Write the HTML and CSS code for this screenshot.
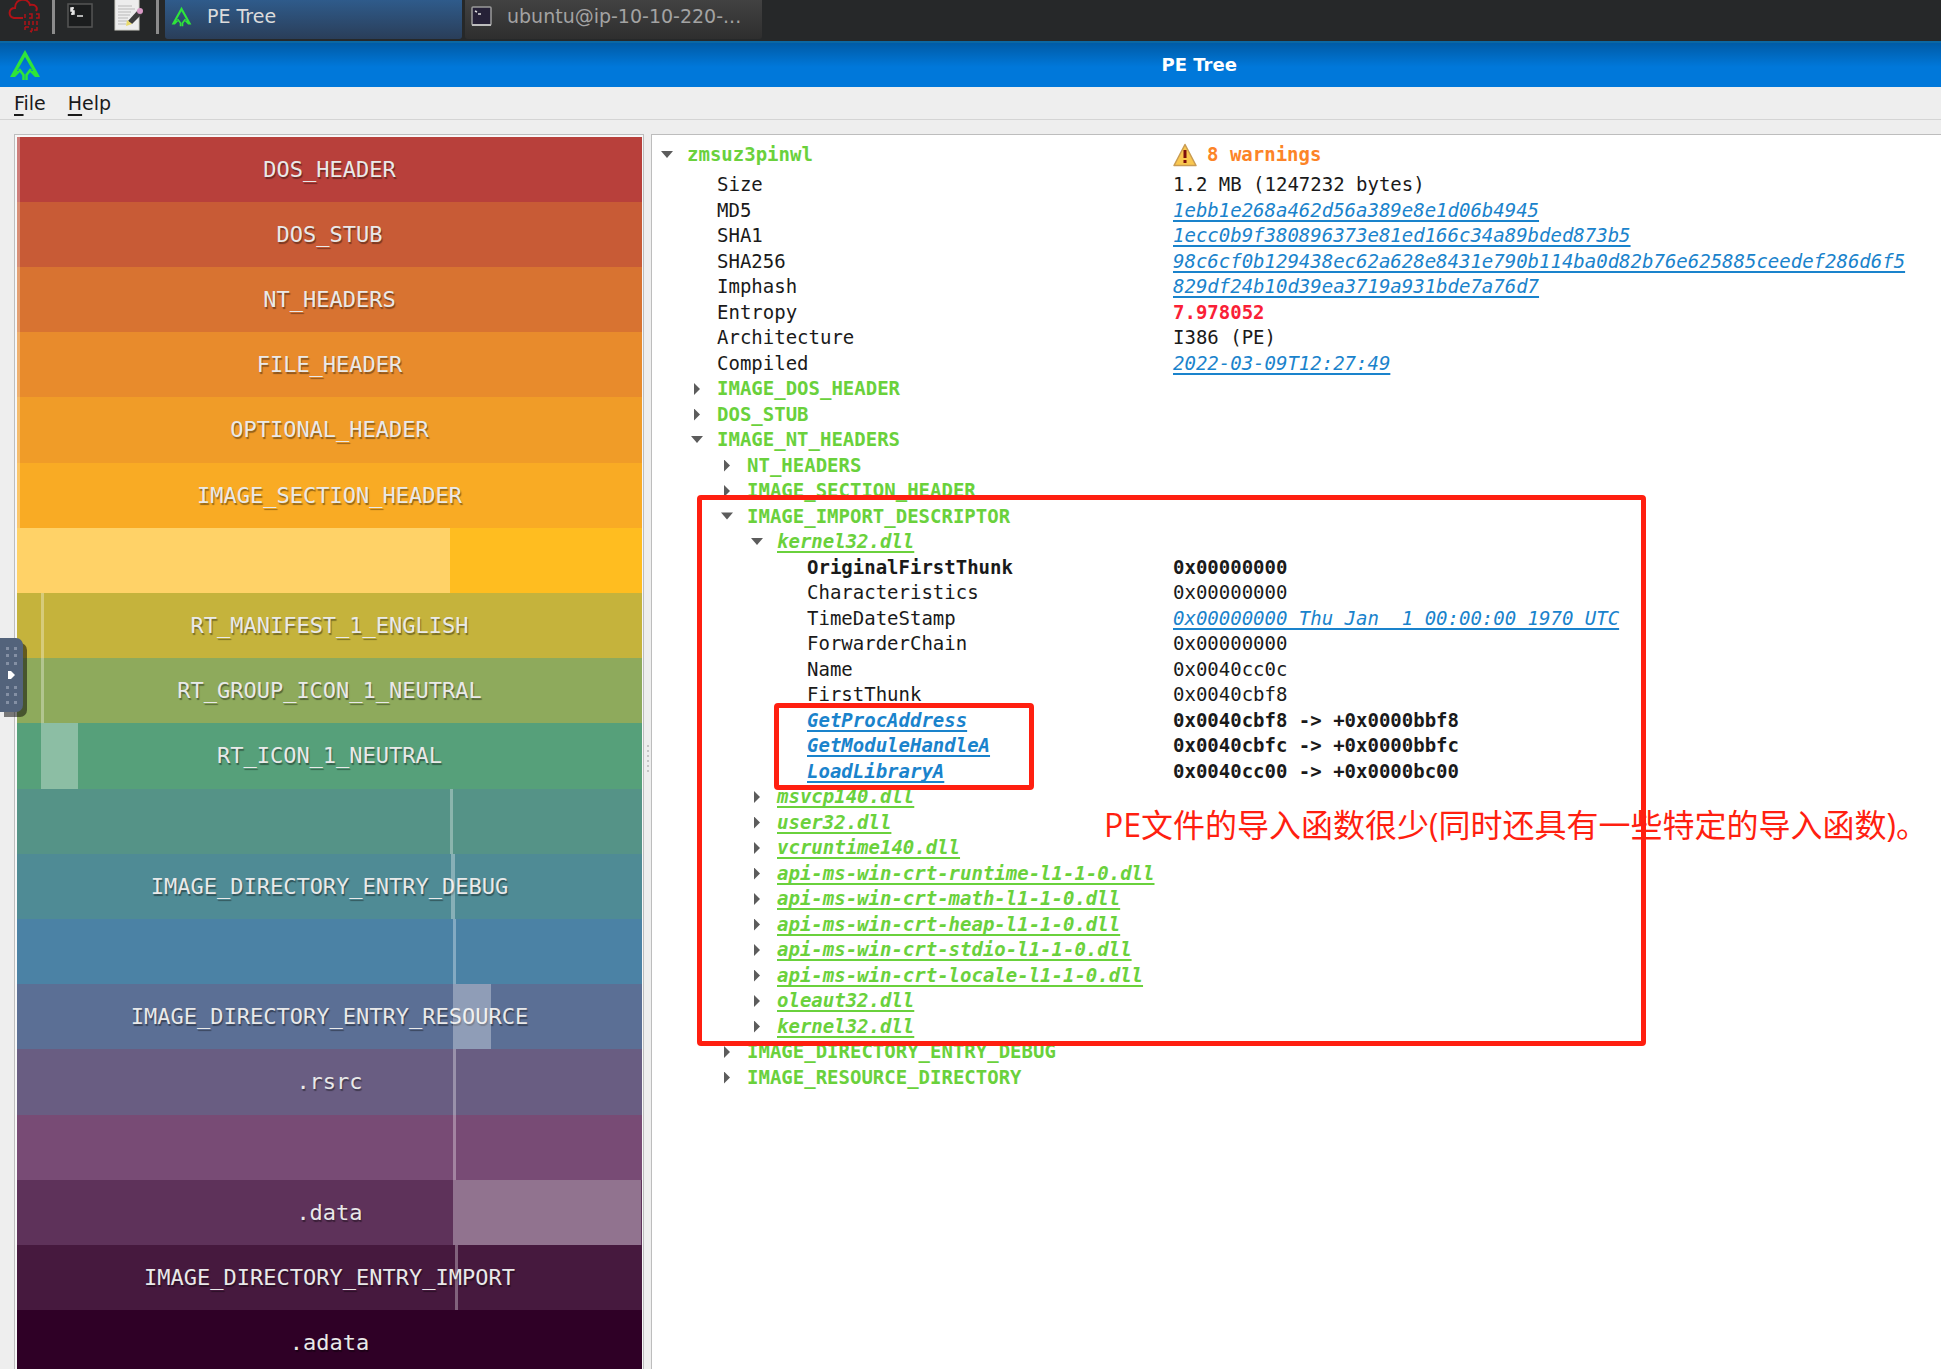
FILE: index.html
```html
<!DOCTYPE html>
<html lang="en">
<head>
<meta charset="utf-8">
<title>PE Tree</title>
<link rel="stylesheet" href="styles.css">
</head>
<body>
<svg width="0" height="0" class="defs" aria-hidden="true">
  <symbol id="logo" viewBox="0 0 32 32">
    <path d="M16 1 31 28H26L22 24 20 22 24 22 16 8 8 22 12 22 10 24 6 28H1Z" fill="#2ee53a"/>
    <path d="M10 20 14.500 26V31M22 20 17.500 26V31" fill="none" stroke="#2ee53a" stroke-width="2.500"/>
  </symbol>
</svg>

<nav class="taskbar" aria-label="Taskbar">
  <button class="launcher" aria-label="Applications">
    <svg width="32" height="34" viewBox="0 0 32 34" fill="none" stroke="#b01217" stroke-width="2">
      <path d="M15 18H6C0 17 0 8 7 8 7-2 20-3 22 5 28 4 30 8 28 11"/>
      <path d="M17 14v4M21 14h3v4h-3M28 14h3v4h-3M17 21v4M21 21v4M25 21v4M29 21v4M17 27h4M17 27v3M24 28v3M29 27v3h-3M22 31l2 1" stroke-width="1.500"/>
    </svg>
  </button>
  <span class="divider"></span>
  <button class="launcher" aria-label="Terminal">
    <svg width="26" height="34" viewBox="0 0 26 34">
      <rect x="1" y="4" width="24" height="23" fill="#1b1d1e" stroke="#555" stroke-width="1.500"/>
      <path d="M7 8H4v3h3v3H4M5.500 7v8M10 16h6" fill="none" stroke="#e6e6e6" stroke-width="1.500"/>
    </svg>
  </button>
  <button class="launcher launcher-edit" aria-label="Text editor">
    <svg width="30" height="34" viewBox="0 0 30 34">
      <rect x="1" y="-4" width="24" height="34" fill="#ededed" stroke="#cfcfc8"/>
      <path d="M4 6h14M4 9h17M4 12h13M4 15h12M4 18h10M4 21h9M4 24h8" stroke="#b9b9b9"/>
      <path d="M14 21 24 10 28 14 18 24Z" fill="#3d3d3d"/>
      <path d="M12 26 13 20 18 24Z" fill="#e8d96a"/>
      <circle cx="26" cy="11" r="3" fill="#d99ac6"/>
    </svg>
  </button>
  <span class="divider"></span>
  <button class="task task-active">
    <svg width="21" height="21"><use href="#logo"/></svg>PE Tree
  </button>
  <button class="task">
    <svg width="21" height="21" viewBox="0 0 21 21">
      <rect x="1" y="1" width="19" height="18" rx="1" fill="#262137" stroke="#9a9a9a" stroke-width="1.500"/>
      <path d="M1 19h19" stroke="#bdbdbd" stroke-width="2"/>
      <path d="M4 5l2 1M7 8h3" stroke="#ddd" stroke-width="1.500"/>
    </svg>ubuntu@ip-10-10-220-...
  </button>
</nav>

<header class="titlebar">
  <svg class="titlebar-logo" width="32" height="32"><use href="#logo"/></svg>
  <h1 class="titlebar-text">PE Tree</h1>
</header>

<nav class="menubar" aria-label="Menu">
  <button class="menu"><span class="key">F</span>ile</button>
  <button class="menu"><span class="key">H</span>elp</button>
</nav>

<main class="workspace">
  <section class="map" aria-label="File map">
    <div class="bar c1"><i class="extent" style="left:0%;width:0.5%"></i>DOS_HEADER</div>
    <div class="bar c2"><i class="extent" style="left:0%;width:0.5%"></i>DOS_STUB</div>
    <div class="bar c3"><i class="extent" style="left:0%;width:0.5%"></i>NT_HEADERS</div>
    <div class="bar c4"><i class="extent" style="left:0%;width:0.5%"></i>FILE_HEADER</div>
    <div class="bar c5"><i class="extent" style="left:0%;width:0.5%"></i>OPTIONAL_HEADER</div>
    <div class="bar c6"><i class="extent" style="left:0%;width:0.5%"></i>IMAGE_SECTION_HEADER</div>
    <div class="bar c7"><i class="extent" style="left:0%;width:69.3%"></i></div>
    <div class="bar c8"><i class="extent" style="left:3.8%;width:0.5%"></i>RT_MANIFEST_1_ENGLISH</div>
    <div class="bar c9"><i class="extent" style="left:3.8%;width:0.5%"></i>RT_GROUP_ICON_1_NEUTRAL</div>
    <div class="bar c10"><i class="extent" style="left:3.8%;width:6%"></i>RT_ICON_1_NEUTRAL</div>
    <div class="bar c11"><i class="extent" style="left:69.3%;width:0.5%"></i></div>
    <div class="bar c12"><i class="extent" style="left:69.5%;width:0.5%"></i>IMAGE_DIRECTORY_ENTRY_DEBUG</div>
    <div class="bar c13"><i class="extent" style="left:69.8%;width:0.5%"></i></div>
    <div class="bar c14"><i class="extent" style="left:69.8%;width:6%"></i>IMAGE_DIRECTORY_ENTRY_RESOURCE</div>
    <div class="bar c15"><i class="extent" style="left:69.8%;width:0.5%"></i>.rsrc</div>
    <div class="bar c16"><i class="extent" style="left:69.8%;width:0.5%"></i></div>
    <div class="bar c17"><i class="extent" style="left:69.8%;width:30%"></i>.data</div>
    <div class="bar c18"><i class="extent" style="left:70%;width:0.5%"></i>IMAGE_DIRECTORY_ENTRY_IMPORT</div>
    <div class="bar c19">.adata</div>
  </section>

  <div class="splitter" aria-hidden="true"><i></i><i></i><i></i><i></i><i></i><i></i></div>

  <section class="details" aria-label="File structure">
    <table class="tree">
      <colgroup><col class="col-name"><col></colgroup>
      <thead>
        <tr>
          <th><div class="name l1"><button class="toggle open" aria-label="Collapse"></button>zmsuz3pinwl</div></th>
          <th><div class="warning">
            <svg width="24" height="24" viewBox="0 0 24 24"><path d="M12 1.500 23 22.500H1Z" fill="#f9c74f" stroke="#c99b52" stroke-width="1.500" stroke-linejoin="round"/><path d="M12 7v8M12 17v3" stroke="#7c0d0d" stroke-width="3"/></svg>8 warnings</div></th>
        </tr>
      </thead>
      <tbody>
        <tr><td class="name l2">Size</td><td>1.2 MB (1247232 bytes)</td></tr>
        <tr><td class="name l2">MD5</td><td><a href="#md5">1ebb1e268a462d56a389e8e1d06b4945</a></td></tr>
        <tr><td class="name l2">SHA1</td><td><a href="#sha1">1ecc0b9f380896373e81ed166c34a89bded873b5</a></td></tr>
        <tr><td class="name l2">SHA256</td><td><a href="#sha256">98c6cf0b129438ec62a628e8431e790b114ba0d82b76e625885ceedef286d6f5</a></td></tr>
        <tr><td class="name l2">Imphash</td><td><a href="#imphash">829df24b10d39ea3719a931bde7a76d7</a></td></tr>
        <tr><td class="name l2">Entropy</td><td class="alert">7.978052</td></tr>
        <tr><td class="name l2">Architecture</td><td>I386 (PE)</td></tr>
        <tr><td class="name l2">Compiled</td><td><a href="#compiled">2022-03-09T12:27:49</a></td></tr>
        <tr><td class="name l2 node"><button class="toggle" aria-label="Expand"></button>IMAGE_DOS_HEADER</td><td></td></tr>
        <tr><td class="name l2 node"><button class="toggle" aria-label="Expand"></button>DOS_STUB</td><td></td></tr>
        <tr><td class="name l2 node"><button class="toggle open" aria-label="Collapse"></button>IMAGE_NT_HEADERS</td><td></td></tr>
        <tr><td class="name l3 node"><button class="toggle" aria-label="Expand"></button>NT_HEADERS</td><td></td></tr>
        <tr><td class="name l3 node"><button class="toggle" aria-label="Expand"></button>IMAGE_SECTION_HEADER</td><td></td></tr>
        <tr><td class="name l3 node"><button class="toggle open" aria-label="Collapse"></button>IMAGE_IMPORT_DESCRIPTOR</td><td></td></tr>
        <tr><td class="name l4 node"><button class="toggle open" aria-label="Collapse"></button><a href="#kernel32">kernel32.dll</a></td><td></td></tr>
        <tr class="strong"><td class="name l5">OriginalFirstThunk</td><td>0x00000000</td></tr>
        <tr><td class="name l5">Characteristics</td><td>0x00000000</td></tr>
        <tr><td class="name l5">TimeDateStamp</td><td><a href="#timestamp">0x00000000 Thu Jan  1 00:00:00 1970 UTC</a></td></tr>
        <tr><td class="name l5">ForwarderChain</td><td>0x00000000</td></tr>
        <tr><td class="name l5">Name</td><td>0x0040cc0c</td></tr>
        <tr><td class="name l5">FirstThunk</td><td>0x0040cbf8</td></tr>
        <tr class="strong"><td class="name l5"><a href="#getprocaddress">GetProcAddress</a></td><td>0x0040cbf8 -&gt; +0x0000bbf8</td></tr>
        <tr class="strong"><td class="name l5"><a href="#getmodulehandle">GetModuleHandleA</a></td><td>0x0040cbfc -&gt; +0x0000bbfc</td></tr>
        <tr class="strong"><td class="name l5"><a href="#loadlibrary">LoadLibraryA</a></td><td>0x0040cc00 -&gt; +0x0000bc00</td></tr>
        <tr><td class="name l4 node"><button class="toggle" aria-label="Expand"></button><a href="#msvcp140">msvcp140.dll</a></td><td></td></tr>
        <tr><td class="name l4 node"><button class="toggle" aria-label="Expand"></button><a href="#user32">user32.dll</a></td><td></td></tr>
        <tr><td class="name l4 node"><button class="toggle" aria-label="Expand"></button><a href="#vcruntime140">vcruntime140.dll</a></td><td></td></tr>
        <tr><td class="name l4 node"><button class="toggle" aria-label="Expand"></button><a href="#crt-runtime">api-ms-win-crt-runtime-l1-1-0.dll</a></td><td></td></tr>
        <tr><td class="name l4 node"><button class="toggle" aria-label="Expand"></button><a href="#crt-math">api-ms-win-crt-math-l1-1-0.dll</a></td><td></td></tr>
        <tr><td class="name l4 node"><button class="toggle" aria-label="Expand"></button><a href="#crt-heap">api-ms-win-crt-heap-l1-1-0.dll</a></td><td></td></tr>
        <tr><td class="name l4 node"><button class="toggle" aria-label="Expand"></button><a href="#crt-stdio">api-ms-win-crt-stdio-l1-1-0.dll</a></td><td></td></tr>
        <tr><td class="name l4 node"><button class="toggle" aria-label="Expand"></button><a href="#crt-locale">api-ms-win-crt-locale-l1-1-0.dll</a></td><td></td></tr>
        <tr><td class="name l4 node"><button class="toggle" aria-label="Expand"></button><a href="#oleaut32">oleaut32.dll</a></td><td></td></tr>
        <tr><td class="name l4 node"><button class="toggle" aria-label="Expand"></button><a href="#kernel32-2">kernel32.dll</a></td><td></td></tr>
        <tr><td class="name l3 node"><button class="toggle" aria-label="Expand"></button>IMAGE_DIRECTORY_ENTRY_DEBUG</td><td></td></tr>
        <tr><td class="name l3 node"><button class="toggle" aria-label="Expand"></button>IMAGE_RESOURCE_DIRECTORY</td><td></td></tr>
      </tbody>
    </table>
    <div class="mark mark-imports"></div>
    <div class="mark mark-functions"></div>
    <p class="note" lang="zh">PE文件的导入函数很少(同时还具有一些特定的导入函数)。</p>
  </section>
</main>

<button class="drawer-handle" aria-label="Open side panel">
  <svg width="23" height="74" viewBox="0 0 23 74">
    <path d="M6 9h3v3H6zM14 9h3v3h-3zM6 16h3v3H6zM14 16h3v3h-3zM6 24h3v3H6zM14 24h3v3h-3zM6 48h3v3H6zM14 48h3v3h-3zM6 55h3v3H6zM14 55h3v3h-3zM6 63h3v3H6zM14 63h3v3h-3z" fill="#8490a4"/>
    <path d="M8 33h3l4 4-4 4H8z" fill="#fff"/>
  </svg>
</button>
</body>
</html>
```

FILE: styles.css
```css
* {
  box-sizing: border-box;
}

body {
  margin: 0;
  height: 100vh;
  overflow: hidden;
  display: flex;
  flex-direction: column;
  background: #eee;
  color: #1a1a1a;
  font-family: "DejaVu Sans", sans-serif;
  font-size: 19px;
}

button {
  margin: 0;
  padding: 0;
  border: 0;
  background: none;
  color: inherit;
  font: inherit;
}

svg {
  display: block;
  flex: none;
}

.defs {
  position: absolute;
}

/* Desktop taskbar */

.taskbar {
  flex: none;
  display: flex;
  align-items: flex-start;
  height: 41px;
  padding-left: 8px;
  background: #262829;
}

.divider {
  width: 3px;
  height: 34px;
  margin: 0 12px;
  background: #8c8c8c;
}

.launcher-edit {
  margin-left: 21px;
}

.task {
  display: flex;
  align-items: center;
  gap: 15px;
  width: 297px;
  height: 39px;
  margin-right: 3px;
  padding: 0 6px 6px;
  border-radius: 0 0 3px 3px;
  background: linear-gradient(#424242, #2e2e2e);
  color: #a3a3a3;
  line-height: 25px;
  white-space: nowrap;
}

.divider + .task {
  margin-left: -6px;
}

.task-active {
  background: linear-gradient(#2f5b8b, #2a3e59);
  color: #dcdcdc;
}

/* Window title and menu */

.titlebar {
  flex: none;
  display: flex;
  align-items: center;
  height: 46px;
  padding-left: 9px;
  border-top: 2px solid #0b68a4;
  background: linear-gradient(#005ba6, #0078da 24px);
  color: #fff;
}

.titlebar-text {
  margin: 0 0 0 58%;
  font-size: 18px;
  line-height: 22px;
}

.menubar {
  flex: none;
  display: flex;
  gap: 22px;
  height: 33px;
  padding-left: 14px;
  border-bottom: 1px solid #d4d4d4;
}

.menu {
  line-height: 32px;
}

.key {
  text-decoration: underline 2px;
  text-underline-offset: 4px;
}

/* Panels */

.workspace {
  flex: 1;
  min-height: 0;
  display: flex;
  padding: 14px 0 0 14px;
}

.map,
.details {
  border: 1px solid #bdbdbd;
  border-bottom: 0;
  overflow: hidden;
}

.map {
  flex: none;
  width: 630px;
  padding: 2px 1px 0 2px;
  background: #f7f7f7;
  font: 22px/66px "DejaVu Sans Mono", monospace;
  color: #e9e9e9;
  text-align: center;
  text-shadow: 1px 2px 1px rgba(0, 0, 0, 0.4);
}

.bar {
  position: relative;
  height: 65px;
}

.bar:nth-child(5n) {
  height: 66px;
}

.extent {
  position: absolute;
  top: 0;
  bottom: 0;
  background: rgba(255, 255, 255, 0.32);
}

.c1 { background: #b8403b; }
.c2 { background: #c85b36; }
.c3 { background: #d87331; }
.c4 { background: #e88b2c; }
.c5 { background: #f09c28; }
.c6 { background: #f9ab24; }
.c7 { background: #ffbd20; }
.c8 { background: #c5b33c; }
.c9 { background: #8eaa5c; }
.c10 { background: #56a07a; }
.c11 { background: #559387; }
.c12 { background: #4f8b95; }
.c13 { background: #4b82a5; }
.c14 { background: #5b6f95; }
.c15 { background: #695d82; }
.c16 { background: #784b75; }
.c17 { background: #5e325a; }
.c18 { background: #46193e; }
.c19 { background: #2f0026; }

.splitter {
  flex: none;
  width: 7px;
  display: flex;
  flex-direction: column;
  align-items: center;
  justify-content: center;
  gap: 3px;
  padding-top: 14px;
}

.splitter i {
  width: 2px;
  height: 2px;
  background: #c4c4c4;
}

/* Structure tree */

.details {
  position: relative;
  flex: 1;
  min-width: 0;
  padding-top: 2px;
  border-right: 0;
  background: #fff;
  font-family: "DejaVu Sans Mono", monospace;
}

.tree {
  width: 100%;
  table-layout: fixed;
  border-collapse: collapse;
  line-height: 25px;
  white-space: pre;
}

.col-name {
  width: 521px;
}

.tree th,
.tree td {
  padding: 0;
  text-align: left;
}

.tree th {
  height: 35px;
  color: #6ad13c;
}

.tree tr {
  height: 25px;
}

.tree tbody tr:nth-child(even) {
  height: 26px;
}

.tree .l1 { padding-left: 35px; }
.tree .l2 { padding-left: 65px; }
.tree .l3 { padding-left: 95px; }
.tree .l4 { padding-left: 125px; }
.tree .l5 { padding-left: 155px; }

.tree a {
  color: #1a83cc;
  font-style: italic;
  text-decoration: underline 2px;
  text-underline-offset: 3px;
  text-decoration-skip-ink: none;
}

.node,
.tree .node a {
  color: #6ad13c;
  font-weight: bold;
}

.strong {
  font-weight: bold;
}

.alert {
  color: #fa1f37;
  font-weight: bold;
}

.warning {
  display: flex;
  align-items: center;
  gap: 10px;
  color: #fc8428;
}

.toggle {
  display: inline-block;
  width: 12px;
  height: 12px;
  margin: 0 14px 0 -26px;
  background: #5c5c5c;
  clip-path: polygon(3px 0, 9px 6px, 3px 12px);
}

.toggle.open {
  clip-path: polygon(0 2px, 12px 2px, 6px 9px);
}

/* Reviewer's marks over the tree */

.mark {
  position: absolute;
  border: 5px solid #ff1f10;
  border-radius: 4px;
  pointer-events: none;
}

.mark-imports {
  left: 45px;
  top: 360px;
  width: 949px;
  height: 551px;
}

.mark-functions {
  left: 122px;
  top: 568px;
  width: 260px;
  height: 87px;
}

.note {
  position: absolute;
  left: 452px;
  top: 670px;
  margin: 0;
  color: #ff1f10;
  font: 32px/40px "Open Sans", "Noto Sans CJK SC", sans-serif;
  white-space: nowrap;
}

.drawer-handle {
  position: fixed;
  left: 0;
  top: 638px;
  border-radius: 0 7px 7px 0;
  background: #53637b;
  box-shadow: 4px 5px 0 rgba(0, 0, 0, 0.5);
}
```
